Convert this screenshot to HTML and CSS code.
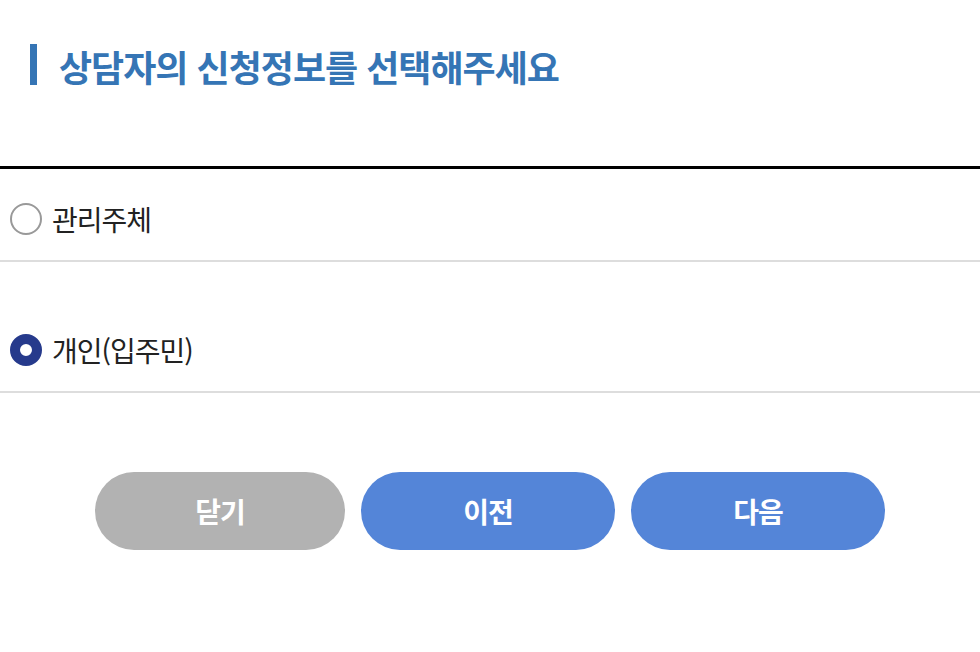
FILE: index.html
```html
<!DOCTYPE html>
<html lang="ko">
<head>
    <meta charset="UTF-8">
    <meta name="viewport" content="width=device-width, initial-scale=1.0">
    <title>상담자 신청정보 선택</title>
    <link rel="stylesheet" href="styles.css">
</head>
<body>

<div class="page">
    <h2 class="page-title">상담자의 신청정보를 선택해주세요</h2>

    <!-- 신청자 구분 -->
    <ul class="choice-list">
        <li class="choice first">
            <label>
                <input type="radio" name="applicant" value="manager">
                <span class="radio-mark"></span>
                <span class="choice-text">관리주체</span>
            </label>
        </li>
        <li class="choice second">
            <label>
                <input type="radio" name="applicant" value="resident" checked>
                <span class="radio-mark"></span>
                <span class="choice-text">개인(입주민)</span>
            </label>
        </li>
    </ul>

    <div class="btn-area">
        <button type="button" class="btn btn-close">닫기</button>
        <button type="button" class="btn btn-blue">이전</button>
        <button type="button" class="btn btn-blue">다음</button>
    </div>
</div>

</body>
</html>
```

FILE: styles.css
```css
body {
    margin: 0;
    padding: 0;
    background: #fff;
    font-family: 'Noto Sans CJK KR', 'Noto Sans', sans-serif;
    color: #222;
}
.page {
    padding-top: 44px;
}
.page-title {
    margin: 0 0 0 30px;
    padding-left: 22px;
    border-left: 7px solid #3575b5;
    color: #3575b5;
    font-size: 36px;
    font-weight: bold;
    letter-spacing: -1px;
    line-height: 44px;
    height: 41px;
}
.choice-list {
    list-style: none;
    margin: 81px 0 0;
    padding: 0;
    border-top: 3px solid #000;
}
.choice {
    border-bottom: 2px solid #ddd;
    padding-bottom: 25px;
}
.choice.first {
    padding-top: 34px;
}
.choice.second {
    padding-top: 72px;
}
.choice label {
    display: flex;
    align-items: center;
    padding-left: 10px;
    height: 32px;
    cursor: pointer;
}
.choice input {
    display: none;
}
.radio-mark {
    width: 32px;
    height: 32px;
    box-sizing: border-box;
    border: 2px solid #999;
    border-radius: 50%;
    background: #fff;
    margin-right: 10px;
    flex-shrink: 0;
}
.choice input:checked + .radio-mark {
    border: 10px solid #263a8c;
}
.choice-text {
    font-size: 28px;
    letter-spacing: -1px;
    line-height: 32px;
}
.btn-area {
    display: flex;
    padding-left: 95px;
    gap: 16px;
    margin-top: 79px;
}
.btn {
    height: 78px;
    border: none;
    border-radius: 39px;
    color: #fff;
    font-family: inherit;
    font-size: 28px;
    font-weight: bold;
    letter-spacing: -1px;
    cursor: pointer;
}
.btn-close {
    width: 250px;
    background: #b2b2b2;
}
.btn-blue {
    width: 254px;
    background: #5485d8;
}
```
